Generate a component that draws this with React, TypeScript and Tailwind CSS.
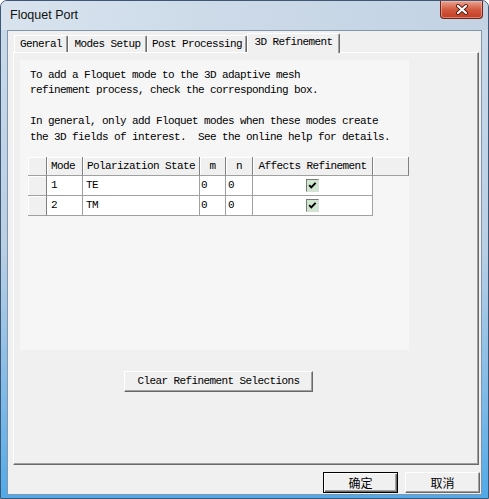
import React from "react";

const mono = "font-['Liberation_Mono',monospace] text-[11px] tracking-[-0.6px] text-black";

function Tab({ label, w, selected, first }: { label: string; w: number; selected?: boolean; first?: boolean }) {
  if (selected) {
    return (
      <div
        className={`${mono} relative z-10 -mb-px h-[20px] flex items-center justify-center pb-[2px] bg-[#f0f0f0] border-l border-t border-r border-l-white border-t-white border-r-[#696969] shadow-[inset_-1px_0_0_#a0a0a0] rounded-tr-[2px] rounded-tl-[1px]`}
        style={{ width: w }}
      >
        {label}
      </div>
    );
  }
  return (
    <div
      className={`${mono} h-[17px] flex items-center justify-center bg-[#f0f0f0] border-l border-t border-r border-l-white border-t-white border-r-[#696969] shadow-[inset_-1px_0_0_#a0a0a0] rounded-tr-[2px] ${first ? "ml-[1px]" : ""}`}
      style={{ width: w }}
    >
      {label}
    </div>
  );
}

const cols = [19, 36, 117, 26, 27, 120, 36];

function HeaderCell({ w, children, align = "left" }: { w: number; children?: React.ReactNode; align?: "left" | "center" }) {
  return (
    <div
      className={`${mono} h-[19px] flex items-center bg-[#f0f0f0] border-r border-b border-r-[#808080] border-b-[#a0a0a0] shadow-[inset_1px_1px_0_#ffffff] ${align === "center" ? "justify-center" : "pl-[4px]"}`}
      style={{ width: w }}
    >
      {children}
    </div>
  );
}

function Check() {
  return (
    <div className="w-[13px] h-[13px] border-t border-l border-t-[#7a7a7a] border-l-[#7a7a7a] border-r border-b border-r-[#dcdcdc] border-b-[#dcdcdc] bg-[#cfe6cf] flex items-center justify-center">
      <svg width="11" height="11" viewBox="0 0 11 11">
        <path d="M2.2 5.2 L4.3 7.4 L8.6 2.8" fill="none" stroke="#000" strokeWidth="1.9" />
      </svg>
    </div>
  );
}

function DataRow({ mode, pol }: { mode: string; pol: string }) {
  const cell = "h-[20px] bg-white border-r border-b border-[#a0a0a0] flex items-center";
  return (
    <div className="flex">
      <div className="w-[19px] h-[20px] bg-[#f0f0f0] border-r border-b border-r-[#808080] border-b-[#a0a0a0] shadow-[inset_1px_1px_0_#ffffff]" />
      <div className={`${cell} ${mono} pl-[4px]`} style={{ width: cols[1] }}>{mode}</div>
      <div className={`${cell} ${mono} pl-[3px]`} style={{ width: cols[2] }}>{pol}</div>
      <div className={`${cell} ${mono} pl-[1px]`} style={{ width: cols[3] }}>0</div>
      <div className={`${cell} ${mono} pl-[2px]`} style={{ width: cols[4] }}>0</div>
      <div className={`${cell} justify-center`} style={{ width: cols[5] }}><Check /></div>
    </div>
  );
}

export default function App() {
  return (
    <div className="w-[489px] h-[499px] flex flex-col overflow-hidden rounded-t-[7px] border border-[#3d5775] bg-gradient-to-b from-[#cbdaea] via-[#b9cfe4] to-[#4faae8]">
      {/* Title bar */}
      <div className="h-[29px] relative flex items-center pl-[9px] pb-[1px] bg-gradient-to-r from-[#d8e3ee] via-[#cbd9e8] to-[#c3d3e4]">
        <span className="font-['Liberation_Sans',sans-serif] text-[12.5px] text-[#111]">Floquet Port</span>
        <div className="absolute right-[5px] top-0 w-[43px] h-[18px] rounded-b-[4px] border border-t-0 border-[#6a2418] bg-gradient-to-b from-[#e9a290] via-[#d25a40] to-[#c23b22] shadow-[inset_0_0_0_1px_rgba(255,200,190,0.5)] flex items-center justify-center">
          <svg width="14" height="11" viewBox="0 0 14 11">
            <path d="M3 2 L11 9 M11 2 L3 9" stroke="#5a1a10" strokeWidth="4" strokeLinecap="round" />
            <path d="M3 2 L11 9 M11 2 L3 9" stroke="#ffffff" strokeWidth="2.2" strokeLinecap="round" />
          </svg>
        </div>
      </div>

      {/* Client area */}
      <div className="flex-1 mx-[6px] mb-[3px] border border-[#8296ab] bg-[#f0f0f0] flex flex-col pl-[5px] pr-[1px] pt-[2px]">
        {/* Tabs */}
        <div className="h-[19px] flex items-end">
          <Tab label="General" w={54} first />
          <Tab label="Modes Setup" w={79} />
          <Tab label="Post Processing" w={100} />
          <Tab label="3D Refinement" w={93} selected />
        </div>

        {/* Panel */}
        <div className="w-[466px] h-[413px] bg-[#f0f0f0] border-l border-t border-l-white border-t-white border-r border-b border-r-[#696969] border-b-[#696969] shadow-[inset_-1px_-1px_0_#a0a0a0] flex flex-col">
          <div className="ml-[6px] mt-[7px] w-[389px] h-[290px] bg-[#f6f6f6] pl-[8px] pt-[8px] flex flex-col">
            <div className={`${mono} pl-[2px] leading-[15.4px] whitespace-pre`}>
              <div>To add a Floquet mode to the 3D adaptive mesh</div>
              <div>refinement process, check the corresponding box.</div>
              <div>&nbsp;</div>
              <div>In general, only add Floquet modes when these modes create</div>
              <div>the 3D fields of interest.  See the online help for details.</div>
            </div>

            <div className="mt-[12px] flex flex-col">
              <div className="flex">
                <HeaderCell w={cols[0]} />
                <HeaderCell w={cols[1]}>Mode</HeaderCell>
                <HeaderCell w={cols[2]}>Polarization State</HeaderCell>
                <HeaderCell w={cols[3]} align="center">m</HeaderCell>
                <HeaderCell w={cols[4]} align="center">n</HeaderCell>
                <HeaderCell w={cols[5]} align="center">Affects Refinement</HeaderCell>
                <HeaderCell w={cols[6]} />
              </div>
              <DataRow mode="1" pol="TE" />
              <DataRow mode="2" pol="TM" />
            </div>
          </div>

          <div
            className={`${mono} ml-[110px] mt-[21px] w-[189px] h-[21px] flex items-center justify-center bg-[#f0f0f0] border-l border-t border-l-white border-t-white border-r border-b border-r-[#696969] border-b-[#696969] shadow-[inset_-1px_-1px_0_#a0a0a0]`}
          >
            Clear Refinement Selections
          </div>
        </div>

        {/* Bottom buttons */}
        <div className="mt-[7px] flex justify-end gap-[7px]">
          <div className="w-[75px] h-[21px] flex items-center justify-center bg-[#f0f0f0] border border-black shadow-[inset_1px_1px_0_#ffffff,inset_-1px_-1px_0_#696969,inset_-2px_-2px_0_#a0a0a0] font-['Noto_Sans_CJK_SC','Noto_Sans',sans-serif] text-[12px] leading-none text-black">
            确定
          </div>
          <div className="w-[75px] h-[21px] flex items-center justify-center bg-[#f0f0f0] border-l border-t border-l-white border-t-white border-r border-b border-r-[#696969] border-b-[#696969] shadow-[inset_-1px_-1px_0_#a0a0a0] font-['Noto_Sans_CJK_SC','Noto_Sans',sans-serif] text-[12px] leading-none text-black">
            取消
          </div>
        </div>
      </div>
    </div>
  );
}
